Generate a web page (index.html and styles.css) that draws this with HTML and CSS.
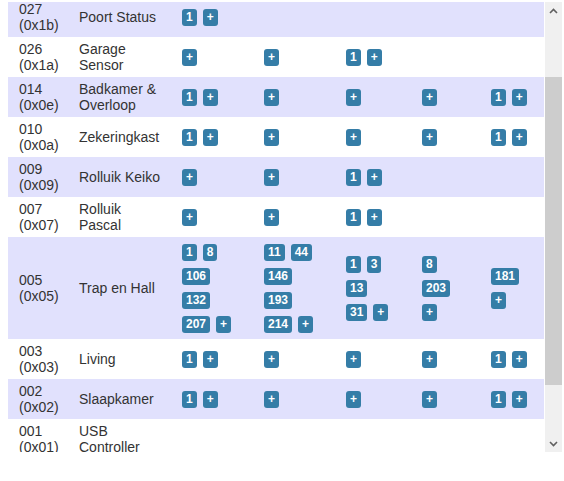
FILE: index.html
```html
<!DOCTYPE html>
<html>

<head>
    <title>Nodes</title>
    <link rel="stylesheet" href="styles.css">
</head>

<body>
    <div class="panel">
        <div class="scroller" id="scroller">
            <table class="nodes">
                <colgroup>
                    <col style="width: 63px">
                    <col style="width: 103px">
                    <col style="width: 82px">
                    <col style="width: 82px">
                    <col style="width: 76px">
                    <col style="width: 69px">
                    <col style="width: 61px">
                </colgroup>
                <tbody>
                    <tr>
                        <td class="id">027<br>(0x1b)</td>
                        <td class="name">Poort Status</td>
                        <td><div class="line"><span class="badge">1</span><span class="badge">+</span></div></td>
                        <td></td>
                        <td></td>
                        <td></td>
                        <td></td>
                    </tr>
                    <tr>
                        <td class="id">026<br>(0x1a)</td>
                        <td class="name">Garage<br>Sensor</td>
                        <td><div class="line"><span class="badge">+</span></div></td>
                        <td><div class="line"><span class="badge">+</span></div></td>
                        <td><div class="line"><span class="badge">1</span><span class="badge">+</span></div></td>
                        <td></td>
                        <td></td>
                    </tr>
                    <tr>
                        <td class="id">014<br>(0x0e)</td>
                        <td class="name">Badkamer &amp;<br>Overloop</td>
                        <td><div class="line"><span class="badge">1</span><span class="badge">+</span></div></td>
                        <td><div class="line"><span class="badge">+</span></div></td>
                        <td><div class="line"><span class="badge">+</span></div></td>
                        <td><div class="line"><span class="badge">+</span></div></td>
                        <td><div class="line"><span class="badge">1</span><span class="badge">+</span></div></td>
                    </tr>
                    <tr>
                        <td class="id">010<br>(0x0a)</td>
                        <td class="name">Zekeringkast</td>
                        <td><div class="line"><span class="badge">1</span><span class="badge">+</span></div></td>
                        <td><div class="line"><span class="badge">+</span></div></td>
                        <td><div class="line"><span class="badge">+</span></div></td>
                        <td><div class="line"><span class="badge">+</span></div></td>
                        <td><div class="line"><span class="badge">1</span><span class="badge">+</span></div></td>
                    </tr>
                    <tr>
                        <td class="id">009<br>(0x09)</td>
                        <td class="name">Rolluik Keiko</td>
                        <td><div class="line"><span class="badge">+</span></div></td>
                        <td><div class="line"><span class="badge">+</span></div></td>
                        <td><div class="line"><span class="badge">1</span><span class="badge">+</span></div></td>
                        <td></td>
                        <td></td>
                    </tr>
                    <tr>
                        <td class="id">007<br>(0x07)</td>
                        <td class="name">Rolluik<br>Pascal</td>
                        <td><div class="line"><span class="badge">+</span></div></td>
                        <td><div class="line"><span class="badge">+</span></div></td>
                        <td><div class="line"><span class="badge">1</span><span class="badge">+</span></div></td>
                        <td></td>
                        <td></td>
                    </tr>
                    <tr>
                        <td class="id">005<br>(0x05)</td>
                        <td class="name">Trap en Hall</td>
                        <td>
                            <div class="line"><span class="badge">1</span><span class="badge">8</span></div>
                            <div class="line"><span class="badge">106</span></div>
                            <div class="line"><span class="badge">132</span></div>
                            <div class="line"><span class="badge">207</span><span class="badge">+</span></div>
                        </td>
                        <td>
                            <div class="line"><span class="badge">11</span><span class="badge">44</span></div>
                            <div class="line"><span class="badge">146</span></div>
                            <div class="line"><span class="badge">193</span></div>
                            <div class="line"><span class="badge">214</span><span class="badge">+</span></div>
                        </td>
                        <td>
                            <div class="line"><span class="badge">1</span><span class="badge">3</span></div>
                            <div class="line"><span class="badge">13</span></div>
                            <div class="line"><span class="badge">31</span><span class="badge">+</span></div>
                        </td>
                        <td>
                            <div class="line"><span class="badge">8</span></div>
                            <div class="line"><span class="badge">203</span></div>
                            <div class="line"><span class="badge">+</span></div>
                        </td>
                        <td>
                            <div class="line"><span class="badge">181</span></div>
                            <div class="line"><span class="badge">+</span></div>
                        </td>
                    </tr>
                    <tr>
                        <td class="id">003<br>(0x03)</td>
                        <td class="name">Living</td>
                        <td><div class="line"><span class="badge">1</span><span class="badge">+</span></div></td>
                        <td><div class="line"><span class="badge">+</span></div></td>
                        <td><div class="line"><span class="badge">+</span></div></td>
                        <td><div class="line"><span class="badge">+</span></div></td>
                        <td><div class="line"><span class="badge">1</span><span class="badge">+</span></div></td>
                    </tr>
                    <tr>
                        <td class="id">002<br>(0x02)</td>
                        <td class="name">Slaapkamer</td>
                        <td><div class="line"><span class="badge">1</span><span class="badge">+</span></div></td>
                        <td><div class="line"><span class="badge">+</span></div></td>
                        <td><div class="line"><span class="badge">+</span></div></td>
                        <td><div class="line"><span class="badge">+</span></div></td>
                        <td><div class="line"><span class="badge">1</span><span class="badge">+</span></div></td>
                    </tr>
                    <tr>
                        <td class="id">001<br>(0x01)</td>
                        <td class="name">USB<br>Controller</td>
                        <td></td>
                        <td></td>
                        <td></td>
                        <td></td>
                        <td></td>
                    </tr>
                </tbody>
            </table>
        </div>
        <div class="scrollbar">
            <div class="arrow">
                <svg width="9" height="6" viewBox="0 0 9 6"><path d="M1 5 L4.5 1.5 L8 5" fill="none" stroke="#606060" stroke-width="1.6"/></svg>
            </div>
            <div class="track"><div class="thumb"></div></div>
            <div class="arrow">
                <svg width="9" height="6" viewBox="0 0 9 6"><path d="M1 1 L4.5 4.5 L8 1" fill="none" stroke="#606060" stroke-width="1.6"/></svg>
            </div>
        </div>
    </div>

    <script>
        document.getElementById('scroller').scrollTop = 5;
    </script>
</body>

</html>
```

FILE: styles.css
```css
body {
    margin: 0;
    font-family: "Liberation Sans", Arial, sans-serif;
    font-size: 14px;
    color: #333;
    background-color: white;
}

.panel {
    display: flex;
    width: 562px;
    height: 450px;
    margin-top: 2px;
}

.scroller {
    flex: 1;
    overflow: hidden;
    padding-left: 8px;
}

.nodes {
    table-layout: fixed;
    width: 536px;
    border-collapse: collapse;
}

.nodes tr {
    height: 40px;
}

.nodes tr:nth-child(odd) {
    background-color: #e1e1fd;
}

.nodes td {
    padding: 3px 0 3px 8px;
    vertical-align: middle;
    line-height: 16px;
}

.nodes td.id {
    padding-left: 11px;
}

.nodes td.name {
    white-space: nowrap;
}

.line {
    display: flex;
    align-items: center;
    gap: 6px;
    height: 24px;
}

.badge {
    display: inline-block;
    padding: 2px 4px 3px;
    font-size: 12px;
    line-height: 12px;
    font-weight: bold;
    color: white;
    background-color: #357da7;
    border-radius: 3px;
}

.scrollbar {
    width: 17px;
    display: flex;
    flex-direction: column;
    background-color: #f0f0f0;
}

.arrow {
    height: 17px;
    display: flex;
    align-items: center;
    justify-content: center;
}

.track {
    flex: 1;
}

.thumb {
    margin-top: 58px;
    height: 308px;
    background-color: #cdcdcd;
}
```
